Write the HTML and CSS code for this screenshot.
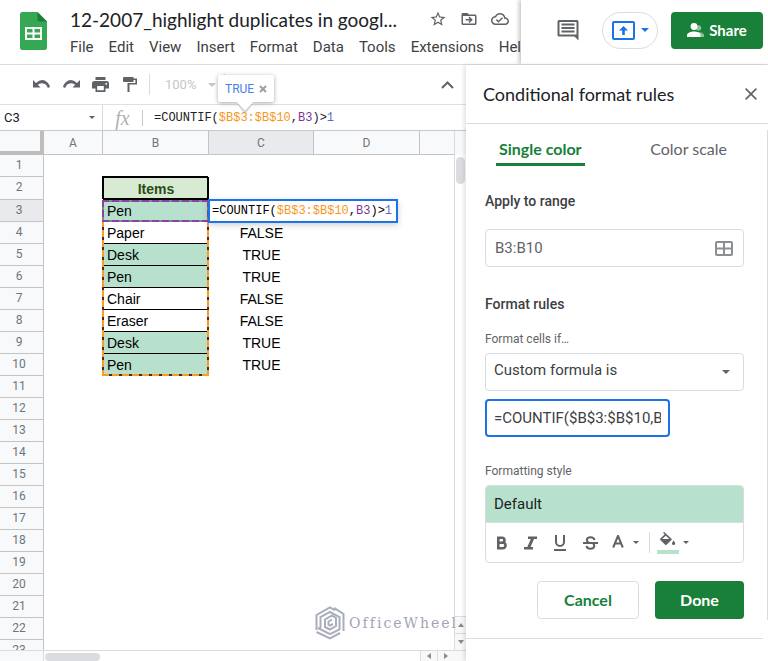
FILE: index.html
```html
<!DOCTYPE html>
<html lang="en">
<head>
<meta charset="utf-8">
<title>12-2007_highlight duplicates</title>
<link rel="stylesheet" href="styles.css">
</head>
<body>
<header class="topbar">
  <div class="doc">
    <svg class="logo" viewBox="0 0 27 38" aria-hidden="true">
      <path fill="#34a853" d="M2.5 0H17.500L27 9.500V35.500A2.500 2.500 0 0 1 24.500 38H2.500A2.500 2.500 0 0 1 0 35.500V2.500A2.500 2.500 0 0 1 2.500 0Z"/>
      <path fill="#188038" d="M17.500 0L27 9.500H19.500A2 2 0 0 1 17.500 7.500Z"/>
      <path fill="#fff" fill-rule="evenodd" d="M5 15H22V28H5ZM7 17V20.500H12.500V17ZM14.500 17V20.500H20V17ZM7 22.500V26H12.500V22.500ZM14.500 22.500V26H20V22.500Z"/>
    </svg>
    <div class="doc-text">
      <div class="title-row">
        <h1 class="title">12-2007_highlight duplicates in googl...</h1>
        <button class="icon-btn" aria-label="Star"><svg width="18" height="18" viewBox="0 0 24 24"><path fill="#5f6368" d="M22 9.240l-7.190-.62L12 2 9.190 8.630 2 9.240l5.460 4.730L5.820 21 12 17.270 18.180 21l-1.630-7.030L22 9.240zM12 15.400l-3.760 2.270 1-4.280-3.320-2.880 4.380-.38L12 6.100l1.710 4.040 4.380.38-3.320 2.880 1 4.280L12 15.400z"/></svg></button>
        <button class="icon-btn" aria-label="Move"><svg width="18" height="18" viewBox="0 0 24 24"><path fill="#5f6368" d="M20 6h-8l-2-2H4c-1.100 0-2 .9-2 2v12c0 1.100.9 2 2 2h16c1.100 0 2-.9 2-2V8c0-1.100-.9-2-2-2zm0 12H4V8h16v10z"/><path fill="none" stroke="#5f6368" stroke-width="2" d="M7.500 13H15M12 9.500L15.500 13L12 16.500"/></svg></button>
        <button class="icon-btn" aria-label="Saved"><svg width="18" height="18" viewBox="0 0 24 24"><path fill="#5f6368" d="M19.350 10.040C18.670 6.590 15.640 4 12 4 9.110 4 6.600 5.640 5.350 8.040 2.340 8.360 0 10.910 0 14c0 3.310 2.690 6 6 6h13c2.760 0 5-2.240 5-5 0-2.640-2.050-4.780-4.650-4.960zM19 18H6c-2.210 0-4-1.790-4-4 0-2.050 1.530-3.760 3.560-3.970l1.070-.11.500-.95C8.080 7.140 9.940 6 12 6c2.620 0 4.880 1.860 5.390 4.430l.3 1.500 1.530.11c1.560.1 2.780 1.410 2.780 2.960 0 1.650-1.350 3-3 3zm-9-3.820l-2.090-2.090L6.500 13.500 10 17l6.010-6.010-1.410-1.410z"/></svg></button>
      </div>
      <nav class="menu">
        <a href="#">File</a><a href="#">Edit</a><a href="#">View</a><a href="#">Insert</a><a href="#">Format</a><a href="#">Data</a><a href="#">Tools</a><a href="#">Extensions</a><a href="#">Help</a>
      </nav>
    </div>
  </div>
  <div class="actions">
    <button class="icon-btn comments" aria-label="Comments"><svg width="22" height="22" viewBox="0 0 22 22"><path fill="#5f6368" fill-rule="evenodd" d="M2 1H20A1.500 1.500 0 0 1 21.500 2.500V21.500L17.500 17.500H2A1.500 1.500 0 0 1 .5 16V2.500A1.500 1.500 0 0 1 2 1ZM2.500 3V15.500H19.500V3ZM4.500 4.500H17.500V6.500H4.500ZM4.500 8H17.500V10H4.500ZM4.500 11.500H17.500V13.500H4.500Z"/></svg></button>
    <button class="present" aria-label="Present"><svg width="23" height="19" viewBox="0 0 23 19"><rect x="1" y="1" width="21" height="17" rx="1" fill="none" stroke="#1a73e8" stroke-width="2"/><path fill="#1a73e8" d="M11.500 5L16 9.500H12.800V14H10.200V9.500H7Z"/></svg><svg width="8" height="4" viewBox="0 0 8 4"><path fill="#1a73e8" d="M0 0H8L4 4Z"/></svg></button>
    <button class="share"><svg width="17" height="14" viewBox="0 0 17 14"><circle cx="11.500" cy="5" r="2.700" fill="#8cc09c"/><path fill="#8cc09c" d="M11 9C14 9 17 10.500 17 12V14H11Z"/><circle cx="7" cy="3.500" r="3.400" fill="#fff"/><path fill="#fff" d="M0 14V12C0 10 4 8.600 7 8.600S13.500 10 13.500 12V14Z"/></svg>Share</button>
  </div>
</header>
<div class="workspace">
  <main class="sheet">
    <div class="toolbar">
      <button class="tool undo" aria-label="Undo"><svg width="17" height="9" viewBox="0 0 17 9"><path fill="#5f6368" d="M0 0L3 3Q9-2.500 14.500 2.500Q16.500 4.500 17 7L14.800 8Q13.500 3.500 9 3.200Q6.500 3.100 4.800 4.700L7.500 7.500H0Z"/></svg></button>
      <button class="tool redo" aria-label="Redo"><svg width="17" height="9" viewBox="0 0 17 9"><path fill="#5f6368" d="M17 0L14 3Q8-2.500 2.500 2.500Q.5 4.500 0 7L2.200 8Q3.500 3.500 8 3.200Q10.500 3.100 12.200 4.700L9.500 7.500H17Z"/></svg></button>
      <button class="tool print" aria-label="Print"><svg width="17" height="15" viewBox="0 0 17 15"><path fill="#5f6368" fill-rule="evenodd" d="M3.500 0H13.500V3H3.500ZM2.500 4H14.500A2.500 2.500 0 0 1 17 6.500V11.500H13.500V15H3.500V11.500H0V6.500A2.500 2.500 0 0 1 2.500 4ZM5.200 9V13.300H11.800V9ZM13.500 6V7.800H15V6Z"/></svg></button>
      <button class="tool paint" aria-label="Paint format"><svg width="14" height="15" viewBox="0 0 14 15"><path fill="#5f6368" d="M1 0H10.500V1.500H14V7.500H6.500V15H4.500V6H12.400V3H10.500V5H1A1 1 0 0 1 0 4V1A1 1 0 0 1 1 0Z"/></svg></button>
      <span class="sep"></span>
      <button class="zoom-level">100%<svg width="8" height="4" viewBox="0 0 8 4"><path fill="#c4c6c8" d="M0 0H8L4 4Z"/></svg></button>
      <span class="sep sep-after"></span>
      <button class="tool collapse" aria-label="Hide the menus"><svg width="13" height="8" viewBox="0 0 13 8"><path fill="none" stroke="#5f6368" stroke-width="2" d="M1 7L6.500 1.500L12 7"/></svg></button>
    </div>
    <div class="formula-bar">
      <button class="name-box">C3<svg width="6" height="3" viewBox="0 0 6 3"><path fill="#5f6368" d="M0 0H6L3 3Z"/></svg></button>
      <span class="fx">fx</span>
      <div class="formula">=COUNTIF(<span class="ref-range">$B$3:$B$10</span>,<span class="ref-cell">B3</span>)&gt;<span class="num">1</span></div>
      <div class="result-tip">TRUE<button aria-label="Dismiss"><svg width="8" height="8" viewBox="0 0 8 8"><path stroke="#9aa0a6" stroke-width="2" d="M1 1L7 7M7 1L1 7"/></svg></button></div>
    </div>
    <div class="grid-area">
      <div class="grid">
        <table class="cells">
          <colgroup><col class="c-num"><col class="c-a"><col class="c-b"><col class="c-c"><col class="c-d"><col></colgroup>
          <thead><tr><th class="corner"></th><th>A</th><th>B</th><th class="active">C</th><th>D</th><th></th></tr></thead>
          <tbody>
            <tr><th>1</th><td></td><td></td><td></td><td></td><td></td></tr>
            <tr class="head-row"><th>2</th><td></td><td class="items">Items</td><td></td><td></td><td></td></tr>
            <tr><th class="active">3</th><td></td><td class="item dup first"><span class="march-range"></span><span class="march-cell"></span>Pen</td><td class="val"><div class="editor">=COUNTIF(<span class="ref-range">$B$3:$B$10</span>,<span class="ref-cell">B3</span>)&gt;<span class="num">1</span></div></td><td></td><td></td></tr>
            <tr><th>4</th><td></td><td class="item">Paper</td><td class="val">FALSE</td><td></td><td></td></tr>
            <tr><th>5</th><td></td><td class="item dup">Desk</td><td class="val">TRUE</td><td></td><td></td></tr>
            <tr><th>6</th><td></td><td class="item dup">Pen</td><td class="val">TRUE</td><td></td><td></td></tr>
            <tr><th>7</th><td></td><td class="item">Chair</td><td class="val">FALSE</td><td></td><td></td></tr>
            <tr><th>8</th><td></td><td class="item">Eraser</td><td class="val">FALSE</td><td></td><td></td></tr>
            <tr><th>9</th><td></td><td class="item dup">Desk</td><td class="val">TRUE</td><td></td><td></td></tr>
            <tr><th>10</th><td></td><td class="item dup">Pen</td><td class="val">TRUE</td><td></td><td></td></tr>
            <tr><th>11</th><td colspan="5"></td></tr>
            <tr><th>12</th><td colspan="5"></td></tr>
            <tr><th>13</th><td colspan="5"></td></tr>
            <tr><th>14</th><td colspan="5"></td></tr>
            <tr><th>15</th><td colspan="5"></td></tr>
            <tr><th>16</th><td colspan="5"></td></tr>
            <tr><th>17</th><td colspan="5"></td></tr>
            <tr><th>18</th><td colspan="5"></td></tr>
            <tr><th>19</th><td colspan="5"></td></tr>
            <tr><th>20</th><td colspan="5"></td></tr>
            <tr><th>21</th><td colspan="5"></td></tr>
            <tr><th>22</th><td colspan="5"></td></tr>
            <tr><th>23</th><td colspan="5"></td></tr>
          </tbody>
        </table>
      </div>
      <div class="vscroll">
        <span class="vthumb"></span>
        <button aria-label="Scroll up"><svg width="6" height="4" viewBox="0 0 6 4"><path fill="#8a8a8a" d="M0 4H6L3 0Z"/></svg></button>
        <button aria-label="Scroll down"><svg width="6" height="4" viewBox="0 0 6 4"><path fill="#8a8a8a" d="M0 0H6L3 4Z"/></svg></button>
      </div>
      <div class="watermark">
        <svg width="30" height="34" viewBox="0 0 30 34" fill="none" stroke="#a9aebb" stroke-width="2"><path d="M1.500 24V9L15 1.500L20 4.300M19 1.800L28.500 8V25M1.500 26L15 32.500L25 27M5.500 22V11L15 5.800L24.500 11V23.500L15 28.200L3 22M10 22V13.500L17 9.500L21 12V20L15 23.500L10 21M17 13.500L13.500 15.500V18.500L15 19.500L18 18"/></svg>
        <span>OfficeWheel</span>
      </div>
    </div>
    <div class="hscroll">
      <span class="hthumb"></span>
      <button aria-label="Scroll left"><svg width="4" height="6" viewBox="0 0 4 6"><path fill="#8a8a8a" d="M4 0V6L0 3Z"/></svg></button>
      <button aria-label="Scroll right"><svg width="4" height="6" viewBox="0 0 4 6"><path fill="#8a8a8a" d="M0 0V6L4 3Z"/></svg></button>
      <span class="hend"></span>
    </div>
  </main>
  <aside class="panel">
    <div class="panel-head">
      <h2>Conditional format rules</h2>
      <button class="icon-btn" aria-label="Close"><svg width="12" height="12" viewBox="0 0 12 12"><path stroke="#5f6368" stroke-width="1.600" d="M.6 .6L11.400 11.400M11.400 .6L.6 11.400"/></svg></button>
    </div>
    <div class="panel-scroll">
      <div class="tabs"><button class="tab selected">Single color</button><button class="tab">Color scale</button></div>
      <form class="rules">
        <label class="section" for="range">Apply to range</label>
        <div class="field range-field"><input id="range" type="text" value="B3:B10"><svg width="18" height="15" viewBox="0 0 18 15" fill="none" stroke="#8b8f94" stroke-width="2"><rect x="1" y="1" width="16" height="13" rx="1"/><path d="M9 1V14M1 7.500H17"/></svg></div>
        <h3 class="section">Format rules</h3>
        <label class="caption" for="cond">Format cells if…</label>
        <div class="field cond-field"><select id="cond"><option>Custom formula is</option></select><svg width="8" height="4" viewBox="0 0 8 4"><path fill="#5f6368" d="M0 0H8L4 4Z"/></svg></div>
        <input class="formula-input" type="text" aria-label="Formula" value="=COUNTIF($B$3:$B$10,B3)&gt;1">
        <h3 class="caption style-caption">Formatting style</h3>
        <div class="style-box">
          <button type="button" class="preview">Default</button>
          <div class="style-tools">
            <button type="button" aria-label="Bold"><svg width="12" height="14" viewBox="0 0 12 14" fill="none" stroke="#5f6368" stroke-width="2.600"><path d="M2.300 1.800H6A2.400 2.400 0 0 1 6 6.700H2.300M2.300 6.700H6.800A2.700 2.700 0 0 1 6.800 12.200H2.300M2.300 .5V13.500"/></svg></button>
            <button type="button" aria-label="Italic"><svg width="13" height="14" viewBox="0 0 13 14"><path fill="#5f6368" d="M4 .5H13V3H10L6.500 11H9V13.500H0V11H3.300L6.800 3H4Z"/></svg></button>
            <button type="button" aria-label="Underline"><svg width="14" height="16" viewBox="0 0 14 16" fill="none" stroke="#5f6368" stroke-width="2"><path d="M3 0V7A4 4 0 0 0 11 7V0M1 15H13"/></svg></button>
            <button type="button" aria-label="Strikethrough"><svg width="15" height="14" viewBox="0 0 15 14" fill="none" stroke="#5f6368" stroke-width="2"><path d="M0 7H15M11.500 4Q11 1.200 7.500 1.200T3.800 4Q3.800 5.300 5.500 6.200M10 8Q11.500 8.800 11.300 10.200Q11 12.800 7.500 12.800T3.500 9.800"/></svg></button>
            <button type="button" class="text-color" aria-label="Text color"><svg width="12" height="16" viewBox="0 0 12 16" fill="none" stroke="#5f6368" stroke-width="2"><path d="M1.200 12.500L6 .8L10.800 12.500M3 8.500H9"/></svg><svg width="6" height="3" viewBox="0 0 6 3"><path fill="#5f6368" d="M0 0H6L3 3Z"/></svg></button>
            <span class="tool-sep"></span>
            <button type="button" class="fill-color" aria-label="Fill color"><svg width="22" height="22" viewBox="0 0 22 22"><path fill="#5f6368" fill-rule="evenodd" d="M6 .8L7.200 0L14.500 6.800Q15 7.400 14.500 8L9.500 12.700Q8.900 13.200 8.200 12.700L3.300 8Q2.800 7.300 3.400 6.600L7.600 2.500ZM5.200 7H12.400L8.800 3.700ZM16.500 8.500Q18.200 10.500 18.200 11.500A1.600 1.600 0 0 1 15 11.500Q15 10.500 16.500 8.500Z"/><path fill="#b7e1cd" d="M0 18H22V22H0Z"/></svg><svg width="6" height="3" viewBox="0 0 6 3"><path fill="#5f6368" d="M0 0H6L3 3Z"/></svg></button>
          </div>
        </div>
        <div class="buttons"><button type="button" class="cancel">Cancel</button><button type="button" class="done">Done</button></div>
      </form>
    </div>
  </aside>
</div>
</body>
</html>
```

FILE: styles.css
```css
* { box-sizing: border-box; }

body {
  margin: 0;
  height: 100vh;
  display: flex;
  flex-direction: column;
  overflow: hidden;
  background: #fff;
  color: #202124;
  font-family: Roboto, "Liberation Sans", sans-serif;
  font-size: 15px;
}

h1, h2, h3 { margin: 0; font-weight: 400; }

button {
  margin: 0;
  padding: 0;
  border: 0;
  background: none;
  color: inherit;
  font: inherit;
}

svg { display: block; flex: none; }

/* Top bar */
.topbar {
  display: flex;
  height: 65px;
  flex: none;
  border-bottom: 1px solid #dadce0;
}
.doc {
  flex: 1;
  min-width: 0;
  display: flex;
  gap: 23px;
  padding: 7px 0 0 20px;
  overflow: hidden;
}
.logo { width: 27px; height: 38px; margin-top: 5px; }
.title-row { display: flex; align-items: center; height: 24px; }
.title {
  width: 359px;
  font-family: Lato, Roboto, sans-serif;
  font-size: 19px;
  white-space: nowrap;
}
.icon-btn { display: flex; align-items: center; justify-content: center; }
.title-row .icon-btn { width: 18px; margin-right: 13px; }
.menu { display: flex; gap: 15px; margin-top: 7px; line-height: 18px; }
.menu a { color: #3c4043; text-decoration: none; }
.actions {
  display: flex;
  align-items: center;
  gap: 13px;
  padding: 0 5px 4px 36px;
  box-shadow: -2px 0 4px rgba(60, 64, 67, 0.3);
  clip-path: inset(0 0 0 -8px);
  background: #fff;
}
.comments { width: 22px; margin-right: 10px; }
.present {
  display: flex;
  align-items: center;
  justify-content: center;
  gap: 6px;
  width: 56px;
  height: 37px;
  border: 1px solid #dadce0;
  border-radius: 19px;
}
.share {
  display: flex;
  align-items: center;
  justify-content: center;
  gap: 5px;
  width: 92px;
  height: 37px;
  border-radius: 4px;
  background: #188038;
  color: #fff;
  font-family: Lato, Roboto, sans-serif;
  font-weight: 700;
}

/* Work area */
.workspace { flex: 1; min-height: 0; display: flex; }
.sheet { flex: 1; min-width: 0; display: flex; flex-direction: column; }

.toolbar {
  display: flex;
  align-items: center;
  height: 40px;
  flex: none;
  padding: 0 12px 0 33px;
  border-bottom: 1px solid #e0e0e0;
}
.tool { margin-right: 12px; }
.undo { margin-right: 13px; }
.paint { margin-left: 2px; }
.sep { width: 1px; height: 21px; background: #dadce0; }
.zoom-level {
  display: flex;
  align-items: center;
  gap: 12px;
  margin-left: 15px;
  color: #c4c6c8;
  font-size: 13px;
}
.sep-after { margin-left: 8px; }
.collapse { margin: 0 0 0 auto; }

.formula-bar {
  position: relative;
  display: flex;
  align-items: center;
  height: 25px;
  flex: none;
}
.name-box {
  display: flex;
  align-items: center;
  justify-content: space-between;
  width: 103px;
  height: 25px;
  padding: 0 7px 0 4px;
  border-right: 1px solid #dadce0;
  font-size: 13px;
}
.fx {
  width: 40px;
  border-right: 1px solid #c8c8c8;
  color: #b0b0b0;
  font: italic 20px/16px "Liberation Serif", serif;
  text-align: center;
}
.formula, .editor { font-family: "Liberation Mono", monospace; font-size: 12px; white-space: nowrap; }
.formula { margin-left: 11px; }
.ref-range { color: #f7981d; }
.ref-cell { color: #7e3794; }
.num { color: #5b6bc0; }

.result-tip {
  position: absolute;
  left: 218px;
  bottom: 28px;
  z-index: 2;
  display: flex;
  align-items: center;
  gap: 5px;
  height: 27px;
  padding: 0 7px;
  border-radius: 2px;
  background: #fff;
  box-shadow: 0 1px 4px rgba(0, 0, 0, 0.35);
  color: #4a80e8;
  font-size: 12px;
}
.result-tip::after {
  content: "";
  position: absolute;
  left: 21px;
  bottom: -6px;
  width: 12px;
  height: 12px;
  background: #fff;
  box-shadow: 2px 2px 2px rgba(0, 0, 0, 0.2);
  transform: rotate(45deg);
  clip-path: polygon(100% 0, 140% 140%, 0 100%);
}

/* Grid */
.grid-area {
  position: relative;
  flex: 1;
  min-height: 0;
  display: flex;
  border-top: 1px solid #c8c8c8;
}
.grid { flex: 1; min-width: 0; overflow: hidden; }
.cells {
  width: 100%;
  table-layout: fixed;
  border-collapse: separate;
  border-spacing: 0;
}
.c-num { width: 44px; }
.c-a { width: 59px; }
.c-b { width: 106px; }
.c-c { width: 105px; }
.c-d { width: 106px; }
.cells th {
  height: 22px;
  padding: 0 5px 2px 0;
  border: 0 solid #c4c4c4;
  border-width: 0 1px 1px 0;
  background: #f8f9fa;
  color: #70757a;
  font-size: 12px;
  font-weight: 400;
  line-height: 18px;
}
.cells thead th { height: 24px; padding: 0; }
.cells thead th:last-child { border-right: 0; }
.cells th.active { background: #e8eaed; }
.cells .corner { border-width: 0 4px 4px 0; border-color: #bdbdbd; }
.cells td {
  height: 22px;
  padding: 0;
  font-family: "Liberation Sans", sans-serif;
  font-size: 14px;
  line-height: 20px;
  color: #000;
}
.cells .head-row th, .cells .head-row td { height: 23px; }
.cells .items {
  position: relative;
  background: #d9ead3;
  box-shadow: -1px -1px 0 #000, inset -2px -2px 0 #000, inset 1px 1px 0 #000;
  color: #274e13;
  font-weight: 700;
  text-align: center;
}
.cells .item { padding-left: 4px; border-bottom: 1px solid #000; }
.cells .dup { background: #b7e1cd; }
.cells .val { position: relative; text-align: center; }
.cells .first { position: relative; border-bottom-color: transparent; }

/* Dashed outlines around the referenced ranges */
.march-range, .march-cell {
  position: absolute;
  left: -1px;
  right: 0;
  top: 0;
  z-index: 1;
  --dash: #ff9a1f;
  --back: #333;
  background:
    repeating-linear-gradient(90deg, var(--dash) 0 7px, var(--back) 7px 10px) 0 0 / 100% 2px,
    repeating-linear-gradient(90deg, var(--dash) 0 7px, var(--back) 7px 10px) 0 100% / 100% 2px,
    repeating-linear-gradient(180deg, var(--dash) 0 7px, var(--back) 7px 10px) 0 0 / 2px 100%,
    repeating-linear-gradient(180deg, var(--dash) 0 7px, var(--back) 7px 10px) 100% 0 / 2px 100%;
  background-repeat: no-repeat;
  pointer-events: none;
}
.march-range { height: 176px; }
.march-cell { height: 22px; --dash: #8e3fa8; --back: #6d9484; }

.editor {
  position: absolute;
  left: -1px;
  top: -1px;
  z-index: 2;
  height: 24px;
  padding: 0 4px 0 2px;
  border: 2px solid #1a73e8;
  background: #fff;
  box-shadow: 0 2px 6px rgba(60, 64, 67, 0.25);
}

.vscroll {
  display: flex;
  flex-direction: column;
  width: 12px;
  border-left: 1px solid #dadce0;
  background: linear-gradient(#f8f9fa 24px, #fff 24px);
}
.vthumb {
  height: 27px;
  margin: 26px 1px auto;
  border-radius: 5px;
  background: #dadce0;
}
.vscroll button, .hscroll button {
  display: flex;
  align-items: center;
  justify-content: center;
  background: #f8f8f8;
}
.vscroll button { height: 17px; border-top: 1px solid #dadce0; }

.hscroll {
  display: flex;
  height: 11px;
  flex: none;
  border-top: 1px solid #dadce0;
  background: linear-gradient(90deg, #f8f9fa 43px, #dadce0 43px 44px, #fff 44px);
}
.hthumb {
  width: 55px;
  height: 8px;
  margin: 2px auto 0 45px;
  border-radius: 4px;
  background: #dadce0;
}
.hscroll button { width: 17px; border-left: 1px solid #dadce0; }
.hend { width: 12px; background: #f8f8f8; }

.watermark {
  position: absolute;
  right: 8px;
  bottom: 10px;
  display: flex;
  align-items: center;
  gap: 4px;
  color: #a0a6b5;
  font-family: "DejaVu Serif", serif;
  font-size: 14px;
  letter-spacing: 2px;
}

/* Side panel */
.panel {
  position: relative;
  width: 302px;
  flex: none;
  display: flex;
  flex-direction: column;
  background: #fff;
  box-shadow: -2px 0 4px rgba(60, 64, 67, 0.15);
}
.panel-head {
  display: flex;
  align-items: center;
  justify-content: space-between;
  height: 59px;
  padding: 0 11px 0 17px;
  border-bottom: 1px solid #dadce0;
}
.panel-head h2 { font-family: Lato, Roboto, sans-serif; font-size: 18px; }
.panel-scroll {
  padding-top: 9px;
  margin-right: 5px;
  border-bottom: 1px solid #dadce0;
}
.panel::after {
  content: "";
  position: absolute;
  right: 0;
  top: 65px;
  width: 1px;
  height: 490px;
  background: #dadce0;
}
.tabs { display: flex; padding: 0 33px 0 30px; justify-content: space-between; }
.tab {
  height: 33px;
  padding: 0 3px;
  border-bottom: 3px solid transparent;
  color: #5f6368;
  font-family: Lato, Roboto, sans-serif;
  font-size: 16px;
}
.selected { border-color: #188038; color: #188038; font-weight: 700; }
.rules { display: flex; flex-direction: column; padding: 25px 19px 19px; }
.section { font-size: 14px; font-weight: 500; line-height: 20px; color: #3c4043; }
.caption { font-size: 12px; line-height: 16px; color: #5f6368; }
.field {
  display: flex;
  align-items: center;
  justify-content: space-between;
  height: 38px;
  padding-right: 10px;
  border: 1px solid #dadce0;
  border-radius: 4px;
}
.field input, .field select {
  flex: 1;
  min-width: 0;
  align-self: stretch;
  padding: 0 9px;
  border: 0;
  background: none;
  color: #5f6368;
  font: inherit;
  appearance: none;
}
.field select { padding: 0 8px 4px; color: #3c4043; }
.range-field { margin: 18px 0 27px; }
.section + .caption { margin-top: 17px; }
.cond-field { margin-top: 6px; padding-right: 13px; }
.formula-input {
  width: 185px;
  height: 38px;
  margin-top: 8px;
  padding: 0 7px;
  border: 2px solid #1a73e8;
  border-radius: 4px;
  color: #3c4043;
  font: inherit;
}
.style-caption { margin-top: 26px; }
.style-box {
  margin-top: 6px;
  border: 1px solid #dadce0;
  border-radius: 4px;
  overflow: hidden;
}
.preview {
  display: block;
  width: 100%;
  height: 36px;
  padding: 0 8px;
  background: #b7e1cd;
  text-align: left;
}
.style-tools {
  display: flex;
  align-items: center;
  height: 40px;
  padding-left: 10px;
  gap: 16px;
  border-top: 1px solid #dadce0;
}
.style-tools button { display: flex; align-items: center; }
.style-tools .text-color { gap: 9px; margin-left: -2px; }
.tool-sep { width: 1px; height: 21px; margin: 0 -9px 0 -6px; background: #dadce0; }
.style-tools .fill-color { gap: 4px; }
.buttons { display: flex; justify-content: flex-end; gap: 16px; margin-top: 18px; }
.cancel, .done {
  height: 38px;
  padding-bottom: 2px;
  border-radius: 4px;
  font-family: Lato, Roboto, sans-serif;
  font-size: 16px;
  font-weight: 700;
}
.cancel { width: 102px; border: 1px solid #dadce0; color: #188038; }
.done { width: 89px; background: #188038; color: #fff; }
```
